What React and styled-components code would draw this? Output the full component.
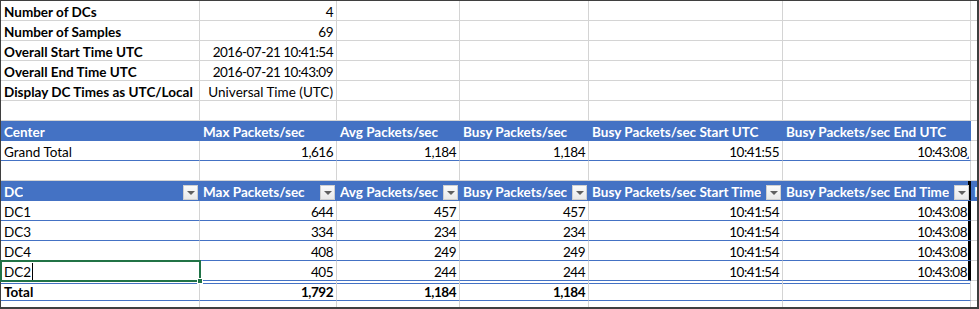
import styled, { createGlobalStyle, css } from 'styled-components';

const BLUE = '#4472c4';
const GRID = '#d4d4d4';
const COLS = 7;

const GlobalStyle = createGlobalStyle`
  html, body {
    margin: 0;
    padding: 0;
    background: #fff;
  }
  body {
    font-family: Lato, "Open Sans", sans-serif;
  }
`;

const Sheet = styled.div`
  display: grid;
  grid-template-columns: 199px 137px 123px 129px 194px 188px 6px;
  grid-template-rows: repeat(15, 20px) 6px;
  width: 979px;
  height: 309px;
  box-sizing: border-box;
  border: 1px solid #3f3f3f;
  border-right-width: 2px;
  border-bottom-width: 2px;
  background: #fff;
  font-family: Lato, "Open Sans", sans-serif;
  font-size: 13.5px;
  color: #000;
`;

const Cell = styled.div`
  position: relative;
  box-sizing: border-box;
  display: flex;
  align-items: flex-end;
  justify-content: ${(p) => (p.$align === 'right' ? 'flex-end' : 'flex-start')};
  padding: 0 3px;
  border-right: 1px solid ${GRID};
  border-bottom: 1px solid ${GRID};
  line-height: 16px;
  white-space: nowrap;
  overflow: hidden;
  font-weight: ${(p) => (p.$bold ? 700 : 400)};
  letter-spacing: ${(p) => (p.$num ? '-0.5px' : 'normal')};

  ${(p) =>
    p.$kind === 'head' &&
    css`
      background: ${BLUE};
      color: #fff;
      font-weight: 700;
      border-color: ${BLUE};
    `}
  ${(p) =>
    p.$kind === 'body' &&
    css`
      border-bottom-color: ${BLUE};
    `}
  ${(p) =>
    p.$kind === 'total' &&
    css`
      border-bottom-color: ${BLUE};
      box-shadow: inset 0 2px 0 #fff, inset 0 3px 0 ${BLUE};
      font-weight: 700;
    `}
  ${(p) =>
    p.$kind === 'tail' &&
    css`
      border-bottom: none;
    `}
  ${(p) =>
    p.$last &&
    css`
      border-right: none;
      padding-right: 0;
    `}
  ${(p) =>
    p.$edge &&
    css`
      border-right-color: #000;
      box-shadow: inset -2px 0 0 #000;
    `}
  ${(p) =>
    p.$selected &&
    css`
      overflow: visible;
    `}
  ${(p) =>
    p.$corner &&
    css`
      &::after {
        content: '';
        position: absolute;
        right: 1px;
        bottom: 1px;
        border-left: 3px solid transparent;
        border-bottom: 3px solid ${BLUE};
      }
    `}
`;

const Label = styled.span`
  overflow: hidden;
`;

// column filter dropdown in the table header
const FilterButton = styled.span`
  flex: none;
  display: flex;
  align-items: center;
  justify-content: center;
  width: 15px;
  height: 15px;
  box-sizing: border-box;
  margin-left: auto;
  margin-right: -2px;
  border: 1px solid #cfcfcf;
  background: linear-gradient(#fbfbfb, #e9e9e9);

  &::after {
    content: '';
    border-left: 4px solid transparent;
    border-right: 4px solid transparent;
    border-top: 4px solid #606060;
  }
`;

const Selection = styled.span`
  position: absolute;
  top: -1px;
  left: -1px;
  right: -2px;
  bottom: -2px;
  border: 2px solid #217346;
  pointer-events: none;
  z-index: 2;

  &::after {
    content: '';
    position: absolute;
    right: -4px;
    bottom: -4px;
    width: 4px;
    height: 4px;
    background: #217346;
    border: 1px solid #fff;
  }
`;

const Caret = styled.span`
  display: inline-block;
  width: 1px;
  height: 17px;
  margin-left: 1px;
  background: #000;
`;

const summary = [
  ['Number of DCs', '4', true],
  ['Number of Samples', '69', true],
  ['Overall Start Time UTC', '2016-07-21 10:41:54', true],
  ['Overall End Time UTC', '2016-07-21 10:43:09', true],
  ['Display DC Times as UTC/Local', 'Universal Time (UTC)', false],
];

const centerHead = [
  'Center',
  'Max Packets/sec',
  'Avg Packets/sec',
  'Busy Packets/sec',
  'Busy Packets/sec Start UTC',
  'Busy Packets/sec End UTC',
];
const centerRow = ['Grand Total', '1,616', '1,184', '1,184', '10:41:55', '10:43:08'];

const dcHead = [
  'DC',
  'Max Packets/sec',
  'Avg Packets/sec',
  'Busy Packets/sec',
  'Busy Packets/sec Start Time',
  'Busy Packets/sec End Time',
];
const dcRows = [
  ['DC1', '644', '457', '457', '10:41:54', '10:43:08'],
  ['DC3', '334', '234', '234', '10:41:54', '10:43:08'],
  ['DC4', '408', '249', '249', '10:41:54', '10:43:08'],
  ['DC2', '405', '244', '244', '10:41:54', '10:43:08'],
];
const dcTotal = ['Total', '1,792', '1,184', '1,184', '', ''];

// empty cells up to the end of the row
function fill(row, from, kind) {
  return Array.from({ length: COLS - from }, (_, i) => (
    <Cell key={`${row}-${from + i}`} $kind={kind} $last={from + i === COLS - 1} />
  ));
}

function App() {
  const cells = [];

  summary.forEach(([label, value, num], r) => {
    cells.push(
      <Cell key={`s${r}-a`} $bold>
        {label}
      </Cell>,
      <Cell key={`s${r}-b`} $align="right" $num={num}>
        {value}
      </Cell>,
      ...fill(`s${r}`, 2)
    );
  });

  cells.push(...fill('gap1', 0));

  centerHead.forEach((text, c) =>
    cells.push(
      <Cell key={`ch${c}`} $kind="head">
        {text}
      </Cell>
    )
  );
  cells.push(...fill('ch', 6));

  centerRow.forEach((text, c) =>
    cells.push(
      <Cell
        key={`cr${c}`}
        $kind="body"
        $align={c ? 'right' : 'left'}
        $num={c > 0}
        $corner={c === 5}
      >
        {text}
      </Cell>
    )
  );
  cells.push(...fill('cr', 6));

  cells.push(...fill('gap2', 0));

  dcHead.forEach((text, c) =>
    cells.push(
      <Cell key={`dh${c}`} $kind="head" $edge={c === 5}>
        <Label>{text}</Label>
        <FilterButton />
      </Cell>
    )
  );
  cells.push(
    <Cell key="dh6" $kind="head" $last>
      N
    </Cell>
  );

  dcRows.forEach((row, r) => {
    const selected = r === dcRows.length - 1;
    row.forEach((text, c) =>
      cells.push(
        <Cell
          key={`dr${r}-${c}`}
          $kind="body"
          $align={c ? 'right' : 'left'}
          $num={c > 0}
          $edge={c === 5}
          $selected={selected && c === 0}
        >
          {text}
          {selected && c === 0 && (
            <>
              <Caret />
              <Selection />
            </>
          )}
        </Cell>
      )
    );
    cells.push(...fill(`dr${r}`, 6));
  });

  dcTotal.forEach((text, c) =>
    cells.push(
      <Cell key={`dt${c}`} $kind="total" $align={c ? 'right' : 'left'} $num={c > 0}>
        {text}
      </Cell>
    )
  );
  cells.push(...fill('dt', 6));

  cells.push(...fill('tail', 0, 'tail'));

  return (
    <>
      <GlobalStyle />
      <Sheet>{cells}</Sheet>
    </>
  );
}

export default App;
